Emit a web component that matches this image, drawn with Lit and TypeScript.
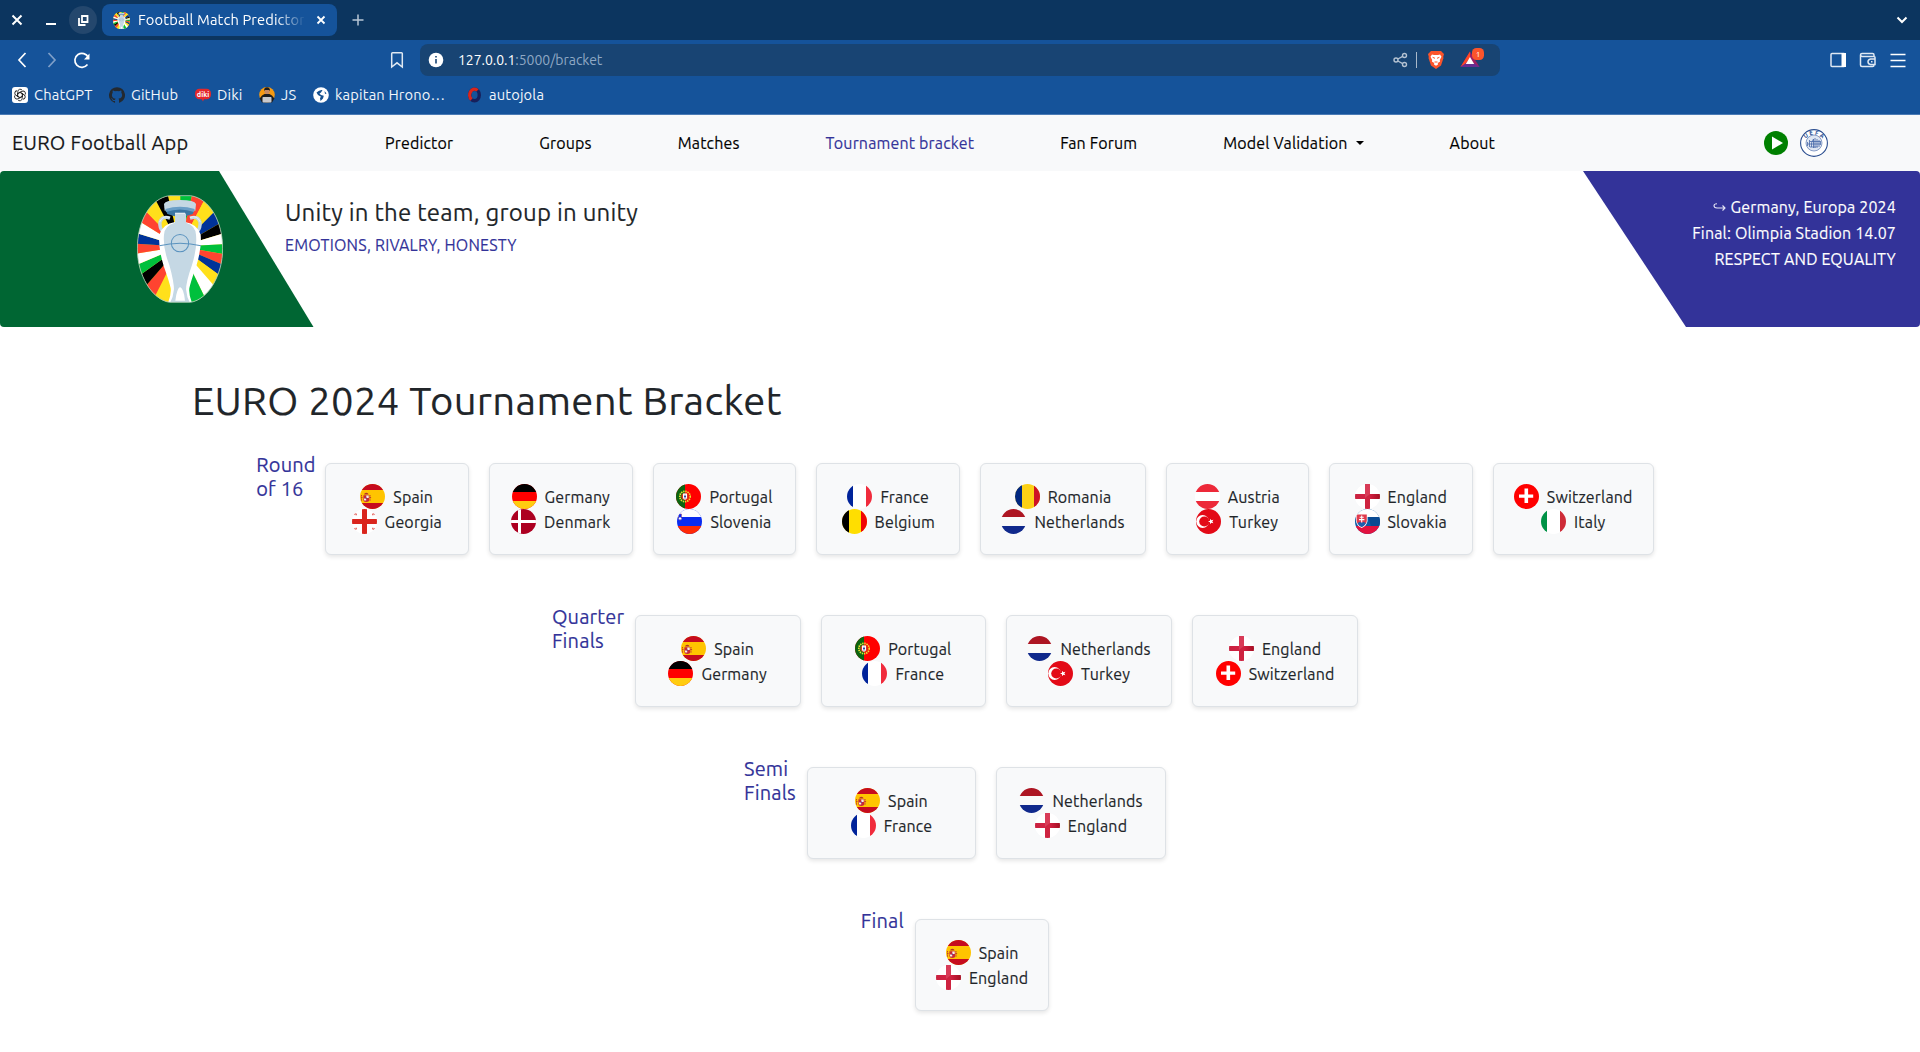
import { LitElement, html, svg, css } from "lit";
import { customElement } from "lit/decorators.js";

const hBands = (a: string, b: string, c: string, y1 = 8, y2 = 17) => svg`
  <rect width="25" height="25" fill=${b}/><rect width="25" height=${y1} fill=${a}/>
  <rect y=${y2} width="25" height=${25 - y2} fill=${c}/>`;
const vBands = (a: string, b: string, c: string, x1 = 6, x2 = 19) => svg`
  <rect width="25" height="25" fill=${b}/><rect width=${x1} height="25" fill=${a}/>
  <rect x=${x2} width=${25 - x2} height="25" fill=${c}/>`;

const flags: Record<string, unknown> = {
  Spain: svg`${hBands("#c60b1e", "#ffc400", "#c60b1e", 6, 19)}
    <path d="M1 13.500h2M1.500 11v6M10 11v6M9.500 13.500h2.200" stroke="#c4402c" stroke-width="1" stroke-dasharray="1.500 .6"/>
    <path d="M3.400 11.200h5.800v4.600q0 2.200-2.900 2.200t-2.900-2.200z" fill="#c8283a"/><path d="M6.300 11.500h2.400v2.400H6.300zM3.800 14.500h2.400v2H4.200z" fill="#f8efe4"/>
    <path d="M4 10.500q.3-1.800 2.300-1.800t2.300 1.800z" fill="#b5302a"/><circle cx="6.300" cy="14.200" r=".7" fill="#5b4a91"/>`,
  Germany: hBands("#000", "#f00", "#ffcc10"),
  France: vBands("#00239a", "#fff", "#f02b3c"),
  Belgium: vBands("#000", "#ffde00", "#f00505", 7, 19),
  Romania: vBands("#002780", "#fcd116", "#ce1126", 7, 19),
  Italy: vBands("#009246", "#fff", "#ce2b37"),
  Austria: hBands("#ed2939", "#fff", "#ed2939"),
  Netherlands: hBands("#ad1522", "#f9f9f9", "#10298c"),
  Denmark: svg`<rect width="25" height="25" fill="#ad0021"/><path d="M7 0h3v25H7zM0 11h25v3H0z" fill="#fff"/>`,
  Portugal: svg`<rect width="25" height="25" fill="#f00"/><rect width="9" height="25" fill="#0b6610"/>
    <circle cx="9" cy="12.500" r="5.200" fill="none" stroke="#e8e232" stroke-width="1.700" stroke-dasharray="1.400 .8"/>
    <circle cx="9" cy="12.500" r="3.600" fill="#d93a1e"/><path d="M7 9.600h4v3.900q0 2-2 2.300-2-.3-2-2.300z" fill="#fff"/>
    <path d="M9 10.800v3.800M8 12.500h2" stroke="#26399a" stroke-width=".9"/>`,
  Slovenia: svg`${hBands("#fff", "#0a2cf0", "#ff2a05")}
    <path d="M1.500 5h3v4.500q-.4 1.600-1.500 2.200-1.100-.6-1.500-2.200z" fill="#0a2cf0" stroke="#a04a6f" stroke-width=".5"/><path d="M1.800 9.600l1.200-1.800 1.400 1.800v.8H1.800z" fill="#fff"/>`,
  Georgia: svg`<rect width="25" height="25" fill="#fff"/><path d="M10 0h5v25h-5zM0 10h25v5H0z" fill="#da251d"/>
    <path d="M1.600 5.800l1.600-1.600M4 4.600l.2 1.600M21.800 4.200l1.600 1.600M21 4.600l-.2 1.600M1.600 19.200l1.600 1.600M4 20.400l.2-1.600M21.800 20.800l1.600-1.600M21 20.400l-.2-1.600" stroke="#da3a33" stroke-width="1.200"/>`,
  England: svg`<rect width="25" height="25" fill="#fff"/><path d="M0 10h25v5H0z" fill="url(#eh)"/><path d="M10 0h5v25h-5z" fill="#ce2340"/><path d="M10 0h5v10l-5 4z" fill="#d83b57"/>
    <defs><linearGradient id="eh"><stop offset="0" stop-color="#c92240"/><stop offset=".55" stop-color="#d62245"/><stop offset="1" stop-color="#a50f22"/></linearGradient></defs>`,
  Switzerland: svg`<rect width="25" height="25" fill="#f00"/><path d="M10.500 4.500h3.600v14.500h-3.600zM5 10.600h14.200v3.200H5z" fill="#fff"/>`,
  Turkey: svg`<rect width="25" height="25" fill="#e30a17"/><circle cx="6.600" cy="12.500" r="6.400" fill="#fff"/><circle cx="8.300" cy="12.500" r="5.100" fill="#e30a17"/>
    <path d="M12 12.500l2-.7.1-2.100 1.300 1.600 2-.6-1.100 1.800 1.100 1.800-2-.6-1.300 1.600-.1-2.100z" fill="#fff"/>`,
  Slovakia: svg`${hBands("#fff", "#0b5aa5", "#e2123f")}<path d="M13 8h12v9h-9z" fill="#0a4a92"/><path d="M5 8h8v5H5z" fill="#1379b8"/>
    <path d="M1 5h11.500v7q-.6 5-5.800 7Q1.600 17 1 12z" fill="#fff"/><path d="M1.600 5.600h10.200v6.200q-.5 4-5.100 6.200-4.500-2.200-5.100-6.200z" fill="#e03a4c"/>
    <path d="M2.600 14.500q2-2.500 4.100-.8 2.100-1.700 4.100.8-1.500 2.600-4.100 3.500-2.600-.9-4.100-3.500z" fill="#1c5fae"/>
    <path d="M6.700 6.500v7M4.700 8.300h4M4 10.600h5.400" stroke="#fff" stroke-width="1.100"/>`,
};

type Match = [string, string, number];
const rounds: { label: string[]; w: number; matches: Match[] }[] = [
  { label: ["Round", "of 16"], w: 58.5, matches: [
    ["Spain", "Georgia", 144], ["Germany", "Denmark", 144], ["Portugal", "Slovenia", 143.5], ["France", "Belgium", 144],
    ["Romania", "Netherlands", 165.5], ["Austria", "Turkey", 143], ["England", "Slovakia", 144], ["Switzerland", "Italy", 161]] },
  { label: ["Quarter", "Finals"], w: 72.7, matches: [
    ["Spain", "Germany", 166], ["Portugal", "France", 165.5], ["Netherlands", "Turkey", 166], ["England", "Switzerland", 166]] },
  { label: ["Semi", "Finals"], w: 53, matches: [["Spain", "France", 169], ["Netherlands", "England", 170]] },
  { label: ["Final"], w: 44.3, matches: [["Spain", "England", 134]] },
];

/* Boundary points run clockwise; each wedge spans from its own point to the next one. */
const wedges: [string, number, number][] = [
  ["#ffe01b", 145, 38], ["#00c03c", 181, 33], ["#ff4430", 215, 37], ["#ffe01b", 250, 52], ["#003399", 282, 82],
  ["#000", 299, 116], ["#fff", 305, 147], ["#00c03c", 308, 178], ["#ff4430", 308, 207], ["#003399", 306, 238],
  ["#ffe01b", 296, 269], ["#fff", 282, 302], ["#00c03c", 252, 332], ["#ffe01b", 200, 350], ["#ffe01b", 150, 349],
  ["#ff4430", 108, 328], ["#000", 82, 298], ["#00c03c", 64, 268], ["#fff", 57, 237], ["#ff4430", 52, 206],
  ["#003399", 53, 177], ["#fff", 56, 147], ["#ff4430", 64, 113], ["#ffe01b", 80, 82], ["#000", 110, 52],
];
const emblem = (id: string) => html`<svg class=${id} viewBox="51 31 258 323" preserveAspectRatio="none">
  <defs><clipPath id="c-${id}"><path d="M148 33H212C270 42 308 110 308 192C308 270 265 343 212 352H148C95 343 52 270 52 192C52 110 90 42 148 33Z"/></clipPath></defs>
  <g clip-path="url(#c-${id})">
    <rect x="40" y="20" width="280" height="340" fill="#ffe01b"/>
    ${wedges.map(([c, x, y], i) => {
      const [, nx, ny] = wedges[(i + 1) % wedges.length];
      const e = (v: number, o: number) => o + (v - o) * 1.3;
      return svg`<polygon points="180,185 ${e(x, 180)},${e(y, 185)} ${e(nx, 180)},${e(ny, 185)}" fill=${c}/>`;
    })}
    <path d="M150 100Q126 92 120 112Q118 128 128 140M210 100Q234 92 240 112Q242 128 232 140" fill="none" stroke="#c5d8e4" stroke-width="10"/>
    <path d="M150 98Q128 90 119 112M210 98Q232 90 241 112" fill="none" stroke="#fff" stroke-width="2"/>
    <path d="M133 66L142 88Q180 104 218 88L227 66Z" fill="#3b76a3"/>
    <path d="M132 58Q136 46 180 46Q224 46 228 58L226 78Q180 62 134 78Z" fill="#c5d8e4"/>
    <path d="M136 73Q180 60 224 73L222 82Q180 66 138 82Z" fill="#6a9fc8"/>
    <path d="M165 84H195V112Q232 118 242 150Q246 190 228 246Q212 290 208 310Q206 330 216 354H144Q154 330 152 310Q148 290 132 246Q114 190 118 150Q128 118 165 112Z" fill="#fff"/>
    <path d="M165 86H198V114Q226 122 228 150Q232 190 216 240Q198 290 198 316H162Q162 290 148 240Q128 190 132 150Q134 122 165 114Z" fill="#c5d8e4"/>
    <path d="M162 312Q160 336 150 354H210Q200 336 198 312Q188 300 180 304Q172 300 162 312Z" fill="#c5d8e4"/>
    <path d="M180 306Q170 312 166 347H195Q192 312 180 306Z" fill="#fff"/>
    <path d="M118 183Q180 167 243 183" fill="none" stroke="#5b93bf" stroke-width="3"/>
    <circle cx="180" cy="175" r="26" fill="none" stroke="#5b93bf" stroke-width="3"/>
  </g>
  <path d="M148 33H212C270 42 308 110 308 192C308 270 265 343 212 352H148C95 343 52 270 52 192C52 110 90 42 148 33Z" fill="none" stroke="#a9cbbd" stroke-width="2.500"/>
</svg>`;

const bookmarks: { cls: string; name: string; icon: unknown }[] = [
  { cls: "b1", name: "ChatGPT", icon: svg`<rect width="16" height="16" rx="3" fill="#fff"/>
    <g fill="none" stroke="#222" stroke-width=".9">${[0, 60, 120, 180, 240, 300].map((a) => svg`<path d="M5.800 6.700V4.500A2.400 2.400 0 0 1 10.200 3.300M5.800 6.700L8.300 5.300L11 6.900" transform="rotate(${a} 8 8)"/>`)}</g>` },
  { cls: "b2", name: "GitHub", icon: svg`<path fill="#24292f" d="M8 .2a8 8 0 0 0-2.530 15.590c.4.070.55-.170.55-.380v-1.490c-2.230.480-2.690-.940-2.690-.940-.360-.920-.890-1.170-.890-1.170-.730-.500.050-.490.050-.490.810.060 1.230.830 1.230.830.720 1.220 1.870.870 2.330.660.070-.520.280-.870.510-1.070-1.780-.200-3.640-.890-3.640-3.950 0-.870.310-1.590.820-2.150-.080-.200-.360-1.020.080-2.120 0 0 .670-.210 2.200.820a7.600 7.600 0 0 1 4 0c1.530-1.040 2.200-.820 2.200-.820.440 1.100.160 1.920.080 2.120.510.560.820 1.270.820 2.150 0 3.070-1.870 3.750-3.650 3.950.290.250.540.730.540 1.480v2.190c0 .210.150.460.550.380A8 8 0 0 0 8 .2z"/>` },
  { cls: "b3", name: "Diki", icon: svg`<rect y="1.800" width="16" height="10.400" rx="4.500" fill="#e4282b"/><path d="M6 11l2 3.500 1.500-3.500z" fill="#e4282b"/><text x="8" y="9.700" font-size="7.200" font-weight="700" text-anchor="middle" fill="#fff">diki</text>` },
  { cls: "b4", name: "JS", icon: svg`<circle cx="8" cy="7.800" r="7.800" fill="#f79a12"/><path d="M.6 11.500Q3 7.500 5.500 7h5q2.500.5 4.900 4.500L13 15.500H3z" fill="#1d1d1f"/><circle cx="8" cy="4.500" r="2.600" fill="#c68863"/><path d="M5 4Q5 .3 8 .3T11 4L10 3H6z" fill="#1d1d1f"/><rect x="3.500" y="10" width="9" height="5.500" rx=".8" fill="#c9c9cc"/>` },
  { cls: "b5", name: "kapitan Hrono…", icon: svg`<circle cx="8" cy="8" r="7.800" fill="#fff"/><path d="M3.500 5.500Q6.500 2.500 9.500 3L8 5.500 6.500 6.500 8 8l2.800.8L10 11.500 7.500 14 7 11 8 9.800 5 8z" fill="#15508f"/><path d="M11.500 4l2 2.500-1.500.5z" fill="#15508f"/>` },
  { cls: "b6", name: "autojola", icon: svg`<g fill="none" stroke-width="3.400"><ellipse cx="7.500" cy="8" rx="4.800" ry="5.800" stroke="#17205c"/><path d="M10.500 3.400A4.800 5.800 0 0 0 4.500 12.500" stroke="#d8261c"/></g>` },
];

@customElement("app-root")
export class AppRoot extends LitElement {
  static styles = css`
    :host { display: block; height: 1052px; overflow: hidden; background: #fff; color: #212529;
      font: 400 16px/24px Ubuntu, "Noto Sans", "Open Sans", sans-serif; }
    * { box-sizing: border-box; }
    svg { display: block; flex: none; }
    .tabs { height: 40px; background: #0c355f; display: flex; align-items: center; color: #fff; }
    .win { width: 102px; height: 40px; flex: none; }
    .tab { width: 235px; height: 32px; border-radius: 8px; background: #15539a; display: flex; align-items: center; padding: 0 10px 0 11px; white-space: nowrap; }
    .fav { width: 17px; height: 17px; }
    .tabname { margin-left: 8px; width: 166px; overflow: hidden; font-size: 14.67px; letter-spacing: .14px; -webkit-mask-image: linear-gradient(90deg, #000 83%, transparent 101%); mask-image: linear-gradient(90deg, #000 83%, transparent 101%); }
    .tabx { margin-left: 12px; }
    .plus { margin-left: 15px; }
    .chev { margin: 0 12px 0 auto; }
    .bar { height: 40px; background: #15539a; display: flex; align-items: center; }
    .navicons { width: 420px; height: 40px; }
    .url { width: 1080px; height: 32px; border-radius: 8px; background: #184473; display: flex; align-items: center; font-size: 14px; letter-spacing: -.04px; padding-left: 8px; color: #fff; }
    .info { margin-right: 14px; }
    .path { color: #8fa8c4; }
    .urlicons { margin-left: auto; width: 112px; height: 32px; }
    .baricons { margin-left: auto; width: 100px; height: 40px; }
    .marks { height: 35px; background: #15539a; border-bottom: 1px solid #4a7bb5; display: flex; align-items: flex-start; padding: 2px 0 0 12px; color: #f2f6fb; font-size: 14.67px; letter-spacing: .17px; white-space: nowrap; }
    .marks text { letter-spacing: 0; }
    .mark { display: flex; align-items: center; height: 26px; gap: 6px; }
    .b1 { width: 97px; } .b2 { width: 86px; } .b3 { width: 64px; } .b4 { width: 54px; } .b5 { width: 154px; gap: 6px; }
    .page { letter-spacing: .01em; -webkit-text-stroke: .15px currentColor; }
    .nav { height: 56px; background: #f8f9fa; display: flex; align-items: center; color: #000; padding-left: 12px; white-space: nowrap; }
    .brand { width: 373px; font-size: 20px; letter-spacing: .012em; color: #16181b; }
    .links { display: flex; align-items: center; gap: 86px; }
    .on { color: #333399; }
    .drop { display: flex; align-items: center; gap: 8px; }
    .caret { border: 4px solid transparent; border-top-color: #000; border-bottom: 0; }
    .play { margin-left: auto; }
    .uefa { margin: 0 92px 0 12px; -webkit-text-stroke: 0; letter-spacing: 0; }
    .banner { height: 156px; display: flex; }
    .green { width: 314px; background: #006633; border-radius: 4px 0 0 4px; clip-path: polygon(0 0, 219px 0, 313.5px 100%, 0 100%); padding: 24px 0 0 137px; }
    .logo { width: 86px; height: 108px; }
    .motto { padding: 27px 0 0; margin-left: -29px; flex: 1; }
    .m1 { font-size: 24px; line-height: 29px; height: 34px; letter-spacing: .009em; }
    .m2 { color: #333399; line-height: 26px; letter-spacing: .012em; }
    .purple { width: 337px; background: #333399; border-radius: 0 4px 4px 0; clip-path: polygon(0 0, 100% 0, 100% 100%, 103px 100%); padding: 23px 24px 0 0; display: flex; flex-direction: column; align-items: flex-end; color: #fff; line-height: 26px; }
    .venue { display: flex; align-items: center; gap: 4px; }
    .title { margin: 50px 0 0 192px; height: 76px; font-size: 40px; line-height: 48px; letter-spacing: .0085em; font-weight: 400; }
    .round { display: flex; justify-content: center; align-items: flex-start; height: 112px; margin-bottom: 40px; }
    .label { flex: none; color: #333399; font-size: 20px; line-height: 24px; display: flex; flex-direction: column; white-space: nowrap; }
    .card { flex: none; height: 92px; margin: 10px; border: 1px solid #dee2e6; border-radius: 6px; background: #f8f9fa; box-shadow: 0 2px 4px rgba(0,0,0,.1); padding: 20px 0; display: flex; flex-direction: column; align-items: center; }
    .team { height: 25px; display: flex; align-items: center; gap: 8px; }
    .name { letter-spacing: .16px; }
    .flag { border-radius: 50%; }
  `;

  private team(name: string) {
    return html`<div class="team"><svg class="flag" width="25" height="25" viewBox="0 0 25 25">${flags[name]}</svg><span class="name">${name}</span></div>`;
  }

  render() {
    return html`
      <div class="tabs">
        <svg class="win" viewBox="0 0 102 40" fill="none" stroke="#fff" stroke-width="2">
          <path d="M12.500 15.500l9 9M21.500 15.500l-9 9"/><path d="M46 24h10"/>
          <circle cx="83" cy="20" r="14" fill="#24476d" stroke="none"/><path d="M82 16h5.500v6H82zM79 18v7h6.500" stroke-width="1.800"/>
        </svg>
        <div class="tab">${emblem("fav")}<div class="tabname">Football Match Predictor</div>
          <svg class="tabx" width="10" height="10" stroke="#fff" stroke-width="1.800"><path d="M1.500 1.500l7 7M8.500 1.500l-7 7"/></svg></div>
        <svg class="plus" width="12" height="12" stroke="#b8c6d6" stroke-width="1.500"><path d="M6 .5v11M.5 6h11"/></svg>
        <svg class="chev" width="12" height="8" fill="none" stroke="#fff" stroke-width="2"><path d="M1.500 1.500L6 6l4.500-4.500"/></svg>
      </div>
      <div class="bar">
        <svg class="navicons" viewBox="0 0 420 40" fill="none" stroke="#fff" stroke-width="1.700">
          <path d="M25.500 13L19 20l6.500 7"/><path d="M48.500 13L55 20l-6.500 7" stroke="#7f9fc8"/>
          <path d="M87.500 24.500A7 7 0 1 1 88.300 17.500"/><path d="M89.500 13.500v6h-5.500z" fill="#fff" stroke="none"/>
          <path d="M392.500 12.800h9q.8 0 .8.800V27l-5.300-4.200-5.300 4.200V13.600q0-.8.8-.8z" stroke-width="1.500" stroke="#dfe8f2"/>
        </svg>
        <div class="url">
          <svg class="info" width="16" height="16"><circle cx="8" cy="8" r="7.300" fill="#fff"/><path d="M8 7v4.500M8 4v1.600" stroke="#184473" stroke-width="1.600"/></svg>
          <span>127.0.0.1</span><span class="path">:5000/bracket</span>
          <svg class="urlicons" viewBox="0 0 112 32" fill="none">
            <g stroke="#b4c2d2" stroke-width="1.400"><circle cx="8" cy="16" r="2"/><circle cx="16.500" cy="11.500" r="2"/><circle cx="16.500" cy="20.500" r="2"/><path d="M9.800 15l4.900-2.600M9.800 17l4.900 2.600"/></g>
            <path d="M28.500 8v16" stroke="#a9b9ca"/>
            <path d="M43 7h10l3 3-.8 3 .3 1-2.500 7.500L48 25l-5-3.500L40.500 14l.3-1L40 10z" fill="#fb542b"/>
            <path d="M44 10.500l2 .5h4l2-.5 1.500 2.300-1.700 3.200.3 1.500-2.300 1.500.2 1.500-2 1.300-2-1.300.2-1.500-2.300-1.500.3-1.500-1.700-3.200z" fill="#fff"/><path d="M44.600 13.300l2.400 1M51.400 13.300l-2.400 1M46.500 18h3" stroke="#fb542b"/>
            <path d="M82 7.500L91.500 23H72.500z" fill="#9e1f63"/><path d="M82 7.500V14l-4.500 5.500-5 3.500z" fill="#ff4724"/><path d="M72.500 23l5-3.500h9l5 3.500z" fill="#662d91"/><path d="M82 13l4.200 7h-8.400z" fill="#fff"/>
            <rect x="84" y="4" width="12" height="12" rx="4.500" fill="#fb542b"/><text x="90" y="12.800" font-size="8" fill="#fff" text-anchor="middle">1</text>
          </svg>
        </div>
        <svg class="baricons" viewBox="0 0 100 40" fill="none" stroke="#dfe8f3" stroke-width="1.500">
          <rect x="11" y="13.500" width="14" height="13" rx="1"/><path d="M21.500 13v14h4.500V13z" fill="#fff" stroke="none"/>
          <path d="M54 16.500V15q0-1.500-1.500-1.500H42q-1.500 0-1.500 1.500v10q0 1.500 1.500 1.500h10.500q1.500 0 1.500-1.500v-.5M40.500 14.500q0 2 2 2H54q1 0 1 1v7H50.500q-2.500-.3-2.500-2.700t2.500-2.800H55"/><path d="M51 21.800h1.500"/>
          <path d="M70.500 14.500h15M70.500 20.500h15M70.500 26.500h15" stroke="#fff" stroke-width="1.300"/>
        </svg>
      </div>
      <div class="marks">${bookmarks.map((b) => html`<div class="mark ${b.cls}"><svg width="16" height="16" viewBox="0 0 16 16">${b.icon}</svg><span>${b.name}</span></div>`)}</div>
      <div class="page">
      <div class="nav">
        <div class="brand">EURO Football App</div>
        <div class="links">
          <span>Predictor</span><span>Groups</span><span>Matches</span><span class="on">Tournament bracket</span><span>Fan Forum</span>
          <span class="drop">Model Validation<span class="caret"></span></span><span>About</span>
        </div>
        <svg class="play" width="24" height="24"><circle cx="12" cy="12" r="12" fill="#008000"/><path d="M8 5.500v13l11-6.500z" fill="#fff"/></svg>
        <svg class="uefa" width="28" height="28" viewBox="0 0 28 28" fill="none" stroke="#2a4d8f">
          <circle cx="14" cy="14" r="13.400" fill="#fff" stroke-width="1.100"/><circle cx="14" cy="14" r="8" fill="#dfe6f2" stroke-width=".7" stroke="#5c78b0"/>
          <path d="M7.500 17v-4M9.500 18v-7M11.500 18v-4l2-4v9M15 19V9M17 18v-8M19 18v-7M20.500 16v-4M8 15h12M10 12.500h10M10 18h8" stroke-width=".8" stroke="#4668a8"/>
          <g fill="#2a4d8f" stroke="none" font-size="5.800" font-weight="700" text-anchor="middle"><text transform="translate(6.800 8.300) rotate(-35)">U</text><text transform="translate(11.500 6) rotate(-12)">E</text><text transform="translate(16.300 6) rotate(12)">F</text><text transform="translate(20.800 8.300) rotate(35)">A</text></g>
        </svg>
      </div>
      <div class="banner">
        <div class="green">${emblem("logo")}</div>
        <div class="motto"><div class="m1">Unity in the team, group in unity</div><div class="m2">EMOTIONS, RIVALRY, HONESTY</div></div>
        <div class="purple">
          <div class="venue"><svg width="13" height="8" fill="none" stroke="#e4e4f4" stroke-width="1.100"><path d="M4 .8Q1 .8 1 2.800T4 5h8M9.500 2.500L12 5 9.500 7.500"/></svg><span>Germany, Europa 2024</span></div>
          <span>Final: Olimpia Stadion 14.07</span><span>RESPECT AND EQUALITY</span>
        </div>
      </div>
      <h1 class="title">EURO 2024 Tournament Bracket</h1>
      ${rounds.map((r) => html`<div class="round">
        <div class="label" style="width:${r.w}px">${r.label.map((t) => html`<span>${t}</span>`)}</div>
        ${r.matches.map(([a, b, w]) => html`<div class="card" style="width:${w}px">${this.team(a)}${this.team(b)}</div>`)}
      </div>`)}
      </div>
    `;
  }
}
